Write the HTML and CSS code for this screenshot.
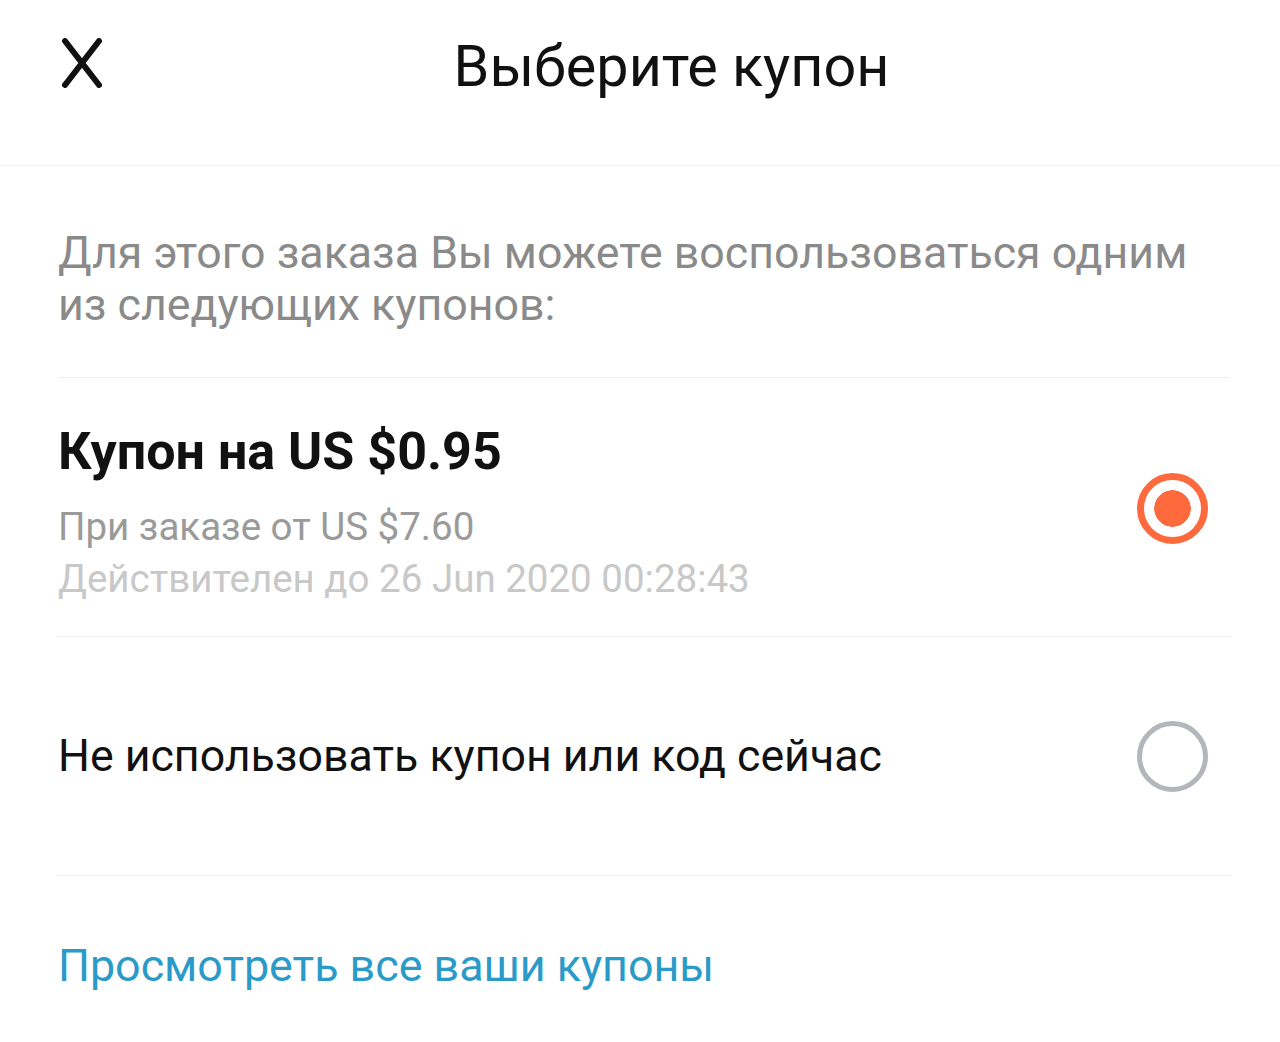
FILE: index.html
```html
<!DOCTYPE html>
<html lang="ru">
<head>
    <meta charset="UTF-8">
    <meta name="viewport" content="width=device-width, initial-scale=1.0">
    <title>Выберите купон</title>
    <link rel="stylesheet" href="styles.css">
</head>
<body>
    <!-- Header -->
    <div class="header">
        <button class="close" aria-label="Закрыть">
            <svg width="40" height="50" viewBox="0 0 40 50">
                <path d="M3 3 L37 47 M37 3 L3 47" stroke="#111" stroke-width="6" stroke-linecap="round" fill="none"/>
            </svg>
        </button>
        <h1 class="title">Выберите купон</h1>
    </div>

    <div class="content">
        <p class="intro">Для этого заказа Вы можете воспользоваться одним из следующих купонов:</p>

        <!-- Coupon list -->
        <div class="option coupon">
            <div class="option-text">
                <div class="coupon-name">Купон на US $0.95</div>
                <div class="coupon-min">При заказе от US $7.60</div>
                <div class="coupon-date">Действителен до 26 Jun 2020 00:28:43</div>
            </div>
            <span class="radio checked"></span>
        </div>

        <div class="option none">
            <div class="option-text">
                <div class="none-label">Не использовать купон или код сейчас</div>
            </div>
            <span class="radio"></span>
        </div>

        <a class="all-link" href="#">Просмотреть все ваши купоны</a>
    </div>
</body>
</html>
```

FILE: styles.css
```css
body {
    margin: 0;
    font-family: Roboto, "Noto Sans", Arial, sans-serif;
    background: #fff;
    color: #111;
}
.header {
    display: flex;
    align-items: center;
    height: 132px;
    padding: 0 39px 33px 0;
    border-bottom: 1px solid #f3f3f3;
}
.close {
    margin: 0 0 7px 62px;
    width: 40px;
    height: 50px;
    padding: 0;
    border: none;
    background: none;
    display: flex;
}
.title {
    flex: 1;
    margin: 0;
    text-align: center;
    font-size: 57.5px;
    font-weight: 400;
    color: #111;
}
.content {
    padding: 0 50px 0 58px;
}
.intro {
    margin: 0;
    padding: 61px 0 46px;
    font-size: 44.7px;
    line-height: 52px;
    color: #8a8a8a;
    border-bottom: 1px solid #eeeeee;
}
.option {
    display: flex;
    align-items: center;
    justify-content: space-between;
    border-bottom: 1px solid #eeeeee;
}
.coupon {
    padding: 44px 0 31px;
}
.none {
    height: 238px;
}
.coupon-name {
    font-size: 52px;
    font-weight: 700;
    line-height: 60px;
    color: #111;
    margin-bottom: 19px;
}
.coupon-min, .coupon-date {
    font-size: 38.5px;
    line-height: 52px;
}
.coupon-min {
    color: #9a9a9a;
}
.coupon-date {
    color: #c8c8c8;
}
.none-label {
    font-size: 44.7px;
    line-height: 52px;
    color: #111;
}
.radio {
    box-sizing: border-box;
    width: 71px;
    height: 71px;
    margin-right: 22px;
    border-radius: 50%;
    border: 5px solid #b3b6bb;
}
.radio.checked {
    margin-bottom: 10px;
    border: 7px solid #ff6a3d;
    background: radial-gradient(circle, #ff6a3d 0 18px, #fff 18.5px);
}
.all-link {
    display: block;
    padding-top: 64px;
    font-size: 44.8px;
    line-height: 52px;
    color: #2a9bc9;
    text-decoration: none;
}
```
